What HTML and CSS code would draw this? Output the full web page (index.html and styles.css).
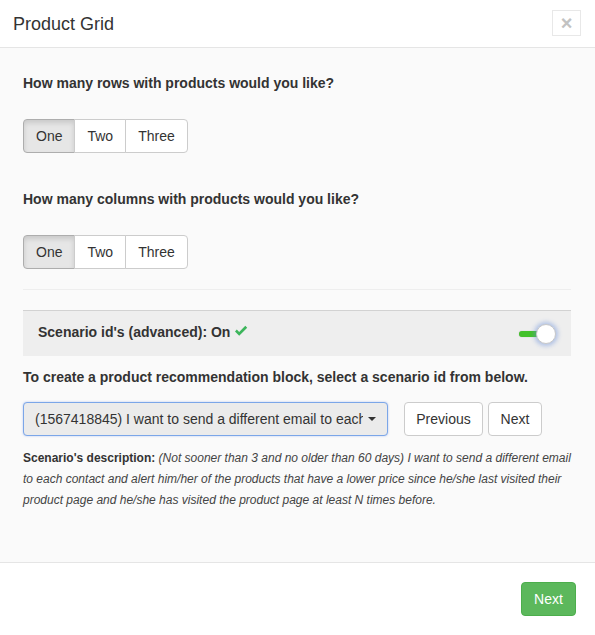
FILE: index.html
```html
<!DOCTYPE html>
<html>
<head>
<meta charset="utf-8">
<link rel="stylesheet" href="styles.css">
</head>
<body>
<div class="modal">
  <div class="modal-header">
    <h4 class="modal-title">Product Grid</h4>
    <button class="close" type="button">&times;</button>
  </div>
  <div class="modal-body">
    <p class="question">How many rows with products would you like?</p>
    <div class="btn-group spaced">
      <button class="btn active">One</button><button class="btn">Two</button><button class="btn">Three</button>
    </div>
    <p class="question">How many columns with products would you like?</p>
    <div class="btn-group">
      <button class="btn active">One</button><button class="btn">Two</button><button class="btn">Three</button>
    </div>
    <hr class="divider">
    <div class="panel">
      <span class="panel-label">Scenario id's (advanced): On
        <svg class="check" width="14" height="12" viewBox="0 0 14 12"><path d="M1 6.5 L2.8 4.6 L5.2 7 L11.3 0.8 L13.2 2.7 L5.2 10.8 Z" fill="#3cb55b"/></svg>
      </span>
      <span class="toggle"><span class="track"></span><span class="knob"></span></span>
    </div>
    <p class="instruction">To create a product recommendation block, select a scenario id from below.</p>
    <div class="select-row">
      <button class="btn dropdown"><span class="dropdown-text">(1567418845) I want to send a different email to each contact</span><span class="caret"></span></button>
      <div class="nav-buttons">
        <button class="btn btn-prev">Previous</button><button class="btn btn-next">Next</button>
      </div>
    </div>
    <p class="description"><strong>Scenario's description:</strong> <em>(Not sooner than 3 and no older than 60 days) I want to send a different email to each contact and alert him/her of the products that have a lower price since he/she last visited their product page and he/she has visited the product page at least N times before.</em></p>
  </div>
  <div class="modal-footer">
    <button class="btn btn-success">Next</button>
  </div>
</div>
</body>
</html>
```

FILE: styles.css
```css
* { box-sizing: border-box; }
html, body { margin: 0; padding: 0; background: #fff; }
body {
  font-family: "Liberation Sans", Arial, sans-serif;
  font-size: 14px;
  line-height: 20px;
  color: #333;
}
.modal { width: 595px; height: 635px; display: flex; flex-direction: column; }
.modal-header {
  height: 48px;
  border-bottom: 1px solid #e5e5e5;
  display: flex;
  align-items: center;
  justify-content: space-between;
  padding: 0 14px 0 13px;
}
.modal-title { margin: 0; font-size: 18px; font-weight: normal; line-height: 22px; color: #333; padding-top: 1px; }
.close {
  width: 29px; height: 26px;
  border: 1px solid #e8e8e8;
  background: #fff;
  color: #c2c2c2;
  font-family: "Liberation Sans", Arial, sans-serif;
  font-size: 20px;
  font-weight: bold;
  line-height: 20px;
  padding: 0;
  margin-top: -1px;
}
.modal-body {
  height: 515px;
  background: #fafafa;
  border-bottom: 1px solid #e5e5e5;
  padding: 25px 24px 0 23px;
}
.question { margin: 0 0 26px; font-weight: bold; line-height: 20px; }
.btn-group { display: flex; height: 34px; margin: 0; }
.btn-group.spaced { margin-bottom: 36px; }
.btn {
  font-family: "Liberation Sans", Arial, sans-serif;
  font-size: 14px;
  line-height: 20px;
  color: #333;
  background: #fff;
  border: 1px solid #ccc;
  border-radius: 4px;
  padding: 6px 12px;
  height: 34px;
  margin: 0;
}
.btn-group .btn { border-radius: 0; margin-left: -1px; }
.btn-group .btn:first-child { border-radius: 4px 0 0 4px; margin-left: 0; }
.btn-group .btn:last-child { border-radius: 0 4px 4px 0; }
.btn.active {
  background: #e6e6e6;
  border-color: #adadad;
  box-shadow: inset 0 3px 5px rgba(0,0,0,0.125);
}
.divider { border: 0; border-top: 1px solid #eee; margin: 20px 0 20px; height: 0; }
.panel {
  height: 46px;
  background: #eee;
  border-top: 1px solid #d2d2d2;
  display: flex;
  align-items: center;
  justify-content: space-between;
  padding: 0 15px 3px 15px;
}
.panel-label { font-weight: bold; display: flex; align-items: center; gap: 4px; }
.check { margin-top: -2px; }
.toggle { position: relative; width: 37px; height: 20px; margin-top: 3px; }
.track {
  position: absolute; left: 0; top: 7px;
  width: 22px; height: 6px;
  background: #43c12a;
  border-radius: 3px;
  box-shadow: 0 0 1px rgba(0,0,0,0.3);
}
.knob {
  position: absolute; right: 0; top: 0;
  width: 20px; height: 20px;
  border-radius: 50%;
  background: #fff;
  border: 1px solid #c8c8c8;
  box-shadow: 0 0 4px 2px rgba(100,140,220,0.45);
}
.instruction { margin: 11px 0 15px; font-weight: bold; }
.select-row { display: flex; align-items: flex-start; }
.dropdown {
  width: 365px;
  display: flex;
  align-items: center;
  background: #ebebeb;
  border-color: #7ba6e8;
  box-shadow: 0 0 2px rgba(102,140,233,0.5);
  padding: 6px 11px 6px 11px;
  text-align: left;
}
.dropdown-text { flex: 1; overflow: hidden; white-space: nowrap; }
.caret {
  margin-left: 5px;
  width: 0; height: 0;
  border-left: 4px solid transparent;
  border-right: 4px solid transparent;
  border-top: 4px solid #333;
}
.nav-buttons { display: flex; gap: 5px; margin-left: 16px; }
.btn-prev { width: 79px; padding: 6px 0; }
.btn-next { width: 54px; padding: 6px 0; }
.description { margin: 12px 0 0; font-size: 12px; line-height: 21px; }
.description em { color: #444; }
.modal-footer {
  flex: 1;
  display: flex;
  justify-content: flex-end;
  align-items: flex-start;
  padding: 19px 19px 0 0;
}
.btn-success {
  background: #5cb85c;
  border-color: #4cae4c;
  color: #fff;
  width: 55px;
  padding: 6px 0;
}
```
